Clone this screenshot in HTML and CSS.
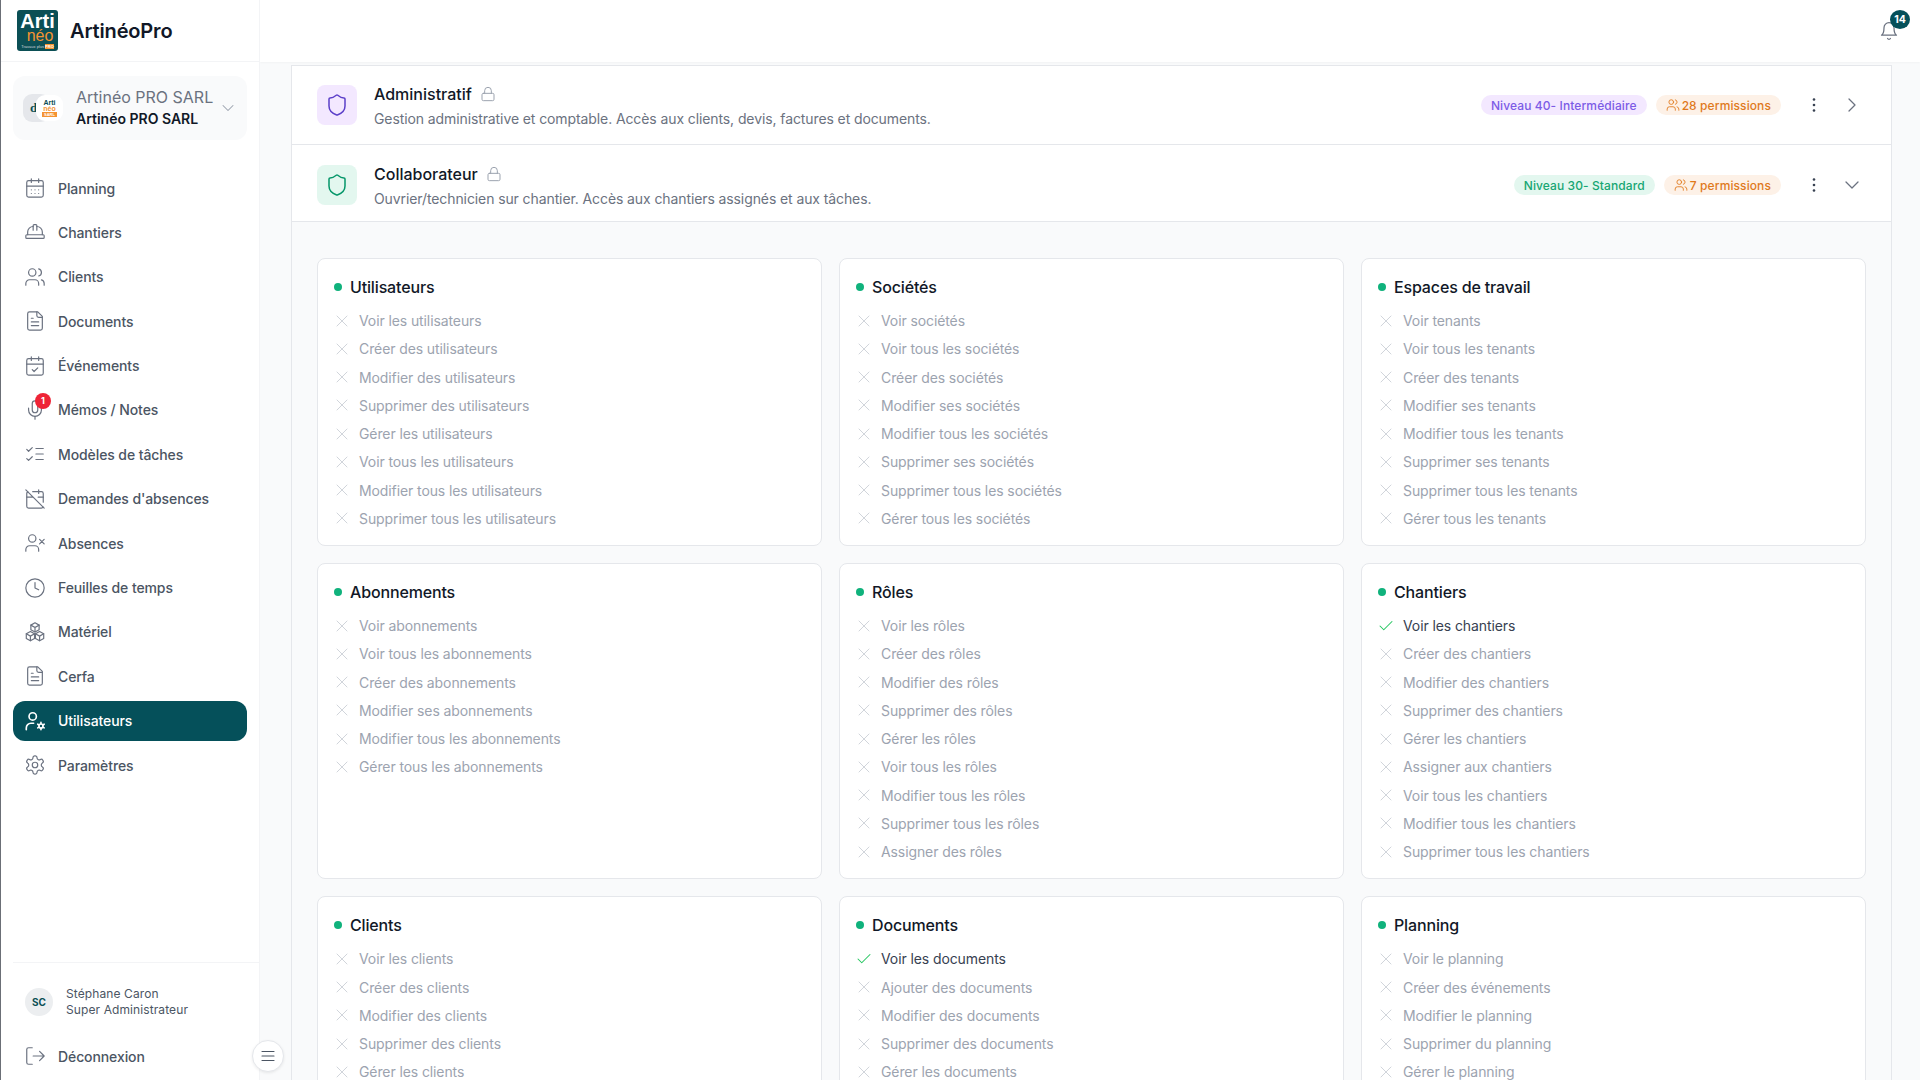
FILE: index.html
```html
<!DOCTYPE html>
<html lang="fr">
<head>
<meta charset="utf-8">
<title>ArtinéoPro</title>
<link rel="stylesheet" href="styles.css">
</head>
<body>
<svg class="defs" width="0" height="0" aria-hidden="true">
<symbol id="i-calendar" viewBox="0 0 24 24"><rect x="3" y="4" width="18" height="18" rx="2"/><path d="M16 2v4M8 2v4M3 10h18M8 14h.01M12 14h.01M16 14h.01M8 18h.01M12 18h.01M16 18h.01"/></symbol>
<symbol id="i-hat" viewBox="0 0 24 24"><path d="M2 18a1 1 0 0 0 1 1h18a1 1 0 0 0 1-1v-2a1 1 0 0 0-1-1H3a1 1 0 0 0-1 1v2z"/><path d="M10 10V5a1 1 0 0 1 1-1h2a1 1 0 0 1 1 1v5"/><path d="M4 15v-3a6 6 0 0 1 6-6"/><path d="M14 6a6 6 0 0 1 6 6v3"/></symbol>
<symbol id="i-users" viewBox="0 0 24 24"><path d="M16 21v-2a4 4 0 0 0-4-4H6a4 4 0 0 0-4 4v2"/><circle cx="9" cy="7" r="4"/><path d="M22 21v-2a4 4 0 0 0-3-3.87"/><path d="M16 3.13a4 4 0 0 1 0 7.75"/></symbol>
<symbol id="i-file" viewBox="0 0 24 24"><path d="M15 2H6a2 2 0 0 0-2 2v16a2 2 0 0 0 2 2h12a2 2 0 0 0 2-2V7Z"/><path d="M14 2v4a2 2 0 0 0 2 2h4"/><path d="M10 9H8M16 13H8M16 17H8"/></symbol>
<symbol id="i-calcheck" viewBox="0 0 24 24"><rect x="3" y="4" width="18" height="18" rx="2"/><path d="M16 2v4M8 2v4M3 10h18M9 16l2 2 4-4"/></symbol>
<symbol id="i-mic" viewBox="0 0 24 24"><path d="M12 2a3 3 0 0 0-3 3v7a3 3 0 0 0 6 0V5a3 3 0 0 0-3-3Z"/><path d="M19 10v2a7 7 0 0 1-14 0v-2"/><path d="M12 19v3"/></symbol>
<symbol id="i-list" viewBox="0 0 24 24"><path d="m3 17 2 2 4-4M3 7l2 2 4-4M13 6h8M13 12h8M13 18h8"/></symbol>
<symbol id="i-caloff" viewBox="0 0 24 24"><path d="M4.2 4.2A2 2 0 0 0 3 6v14a2 2 0 0 0 2 2h14a2 2 0 0 0 1.82-1.18"/><path d="M21 15.5V6a2 2 0 0 0-2-2H9.5"/><path d="M16 2v4M3 10h7M21 10h-5.5M2 2l20 20"/></symbol>
<symbol id="i-userx" viewBox="0 0 24 24"><path d="M16 21v-2a4 4 0 0 0-4-4H6a4 4 0 0 0-4 4v2"/><circle cx="9" cy="7" r="4"/><path d="m17 8 5 5M22 8l-5 5"/></symbol>
<symbol id="i-clock" viewBox="0 0 24 24"><circle cx="12" cy="12" r="10"/><path d="M12 6v6l4 2"/></symbol>
<symbol id="i-boxes" viewBox="0 0 24 24"><path d="M12 2l4.5 2.5v5L12 12 7.500 9.500v-5zM7 11.500l4.500 2.500v5L7 21.500 2.500 19v-5zM17 11.500l4.500 2.500v5L17 21.500 12.500 19v-5z"/><path d="M7.500 4.500 12 7l4.500-2.500M12 7v5M2.500 14 7 16.500l4.500-2.500M7 16.500v5M12.500 14l4.500 2.500 4.500-2.500M17 16.500v5"/></symbol>
<symbol id="i-usercog" viewBox="0 0 24 24"><circle cx="9.500" cy="7" r="4"/><path d="M2.500 21.500v-2a5 5 0 0 1 5-5h3"/><circle cx="18.500" cy="17.500" r="2.200"/><path d="M18.500 13.500v1.500M18.500 20v1.500M15 15.500l1.300.8M20.700 18.700l1.300.8M15 19.500l1.300-.8M20.700 16.300l1.300-.8"/></symbol>
<symbol id="i-gear" viewBox="0 0 24 24"><path d="M12.220 2h-.44a2 2 0 0 0-2 2v.18a2 2 0 0 1-1 1.730l-.43.25a2 2 0 0 1-2 0l-.15-.08a2 2 0 0 0-2.730.73l-.22.38a2 2 0 0 0 .73 2.730l.15.1a2 2 0 0 1 1 1.720v.51a2 2 0 0 1-1 1.740l-.15.09a2 2 0 0 0-.73 2.730l.22.38a2 2 0 0 0 2.730.73l.15-.08a2 2 0 0 1 2 0l.43.25a2 2 0 0 1 1 1.730V20a2 2 0 0 0 2 2h.44a2 2 0 0 0 2-2v-.18a2 2 0 0 1 1-1.730l.43-.25a2 2 0 0 1 2 0l.15.08a2 2 0 0 0 2.730-.73l.22-.39a2 2 0 0 0-.73-2.730l-.15-.08a2 2 0 0 1-1-1.740v-.5a2 2 0 0 1 1-1.740l.15-.09a2 2 0 0 0 .73-2.730l-.22-.38a2 2 0 0 0-2.730-.73l-.15.08a2 2 0 0 1-2 0l-.43-.25a2 2 0 0 1-1-1.730V4a2 2 0 0 0-2-2z"/><circle cx="12" cy="12" r="3"/></symbol>
<symbol id="i-logout" viewBox="0 0 24 24"><path d="M9 21H5a2 2 0 0 1-2-2V5a2 2 0 0 1 2-2h4"/><path d="m17 17 5-5-5-5M22 12H10"/></symbol>
<symbol id="i-shield" viewBox="0 0 24 24"><path d="M20 13c0 5-3.500 7.500-7.660 8.950a1 1 0 0 1-.67-.01C7.500 20.500 4 18 4 13V6a1 1 0 0 1 1-1c2 0 4.500-1.200 6.240-2.720a1.170 1.170 0 0 1 1.520 0C14.510 3.810 17 5 19 5a1 1 0 0 1 1 1z"/></symbol>
<symbol id="i-lock" viewBox="0 0 24 24"><rect x="3" y="11" width="18" height="11" rx="2"/><path d="M7 11V7a5 5 0 0 1 10 0v4"/></symbol>
<symbol id="i-bell" viewBox="0 0 24 24"><path d="M6 8a6 6 0 0 1 12 0c0 7 3 9 3 9H3s3-2 3-9"/><path d="M10.300 21a1.940 1.940 0 0 0 3.400 0"/></symbol>
<symbol id="i-down" viewBox="0 0 24 24"><path d="m6 9 6 6 6-6"/></symbol>
<symbol id="i-right" viewBox="0 0 24 24"><path d="m9 6 6 6-6 6"/></symbol>
<symbol id="i-x" viewBox="0 0 24 24"><path d="M18 6 6 18M6 6l12 12"/></symbol>
<symbol id="i-check" viewBox="0 0 24 24"><path d="M20 6 9 17l-5-5"/></symbol>
<symbol id="i-menu" viewBox="0 0 24 24"><path d="M4 6h16M4 12h16M4 18h16"/></symbol>
</svg>

<div class="app">
  <aside class="sidebar">
    <header class="brand">
      <div class="logo"><span class="logo-a">Arti</span><span class="logo-n">néo</span><span class="logo-p">Travaux plus <b>PRO</b></span></div>
      <span class="brand-name">ArtinéoPro</span>
    </header>
    <div class="company">
      <div class="company-logos">
        <span class="back-logo">d</span>
        <span class="front-logo"><span class="mini-a">Arti</span><span class="mini-n">néo</span><span class="mini-p">SARL</span></span>
      </div>
      <div class="company-text"><span class="company-top">Artinéo PRO SARL</span><span class="company-bottom">Artinéo PRO SARL</span></div>
      <svg class="ico company-chev"><use href="#i-down"/></svg>
    </div>
    <nav class="nav">
      <a class="nav-item"><svg class="ico"><use href="#i-calendar"/></svg>Planning</a>
      <a class="nav-item"><svg class="ico"><use href="#i-hat"/></svg>Chantiers</a>
      <a class="nav-item"><svg class="ico"><use href="#i-users"/></svg>Clients</a>
      <a class="nav-item"><svg class="ico"><use href="#i-file"/></svg>Documents</a>
      <a class="nav-item"><svg class="ico"><use href="#i-calcheck"/></svg>Événements</a>
      <a class="nav-item"><span class="ico-wrap"><svg class="ico"><use href="#i-mic"/></svg><span class="red-badge">1</span></span>Mémos / Notes</a>
      <a class="nav-item"><svg class="ico"><use href="#i-list"/></svg>Modèles de tâches</a>
      <a class="nav-item"><svg class="ico"><use href="#i-caloff"/></svg>Demandes d'absences</a>
      <a class="nav-item"><svg class="ico"><use href="#i-userx"/></svg>Absences</a>
      <a class="nav-item"><svg class="ico"><use href="#i-clock"/></svg>Feuilles de temps</a>
      <a class="nav-item"><svg class="ico"><use href="#i-boxes"/></svg>Matériel</a>
      <a class="nav-item"><svg class="ico"><use href="#i-file"/></svg>Cerfa</a>
      <a class="nav-item active"><svg class="ico"><use href="#i-usercog"/></svg>Utilisateurs</a>
      <a class="nav-item"><svg class="ico"><use href="#i-gear"/></svg>Paramètres</a>
    </nav>
    <footer class="side-foot">
      <div class="user"><span class="avatar">SC</span><div class="user-text"><span>Stéphane Caron</span><span>Super Administrateur</span></div></div>
      <a class="nav-item logout"><svg class="ico"><use href="#i-logout"/></svg>Déconnexion</a>
    </footer>
    <button class="collapse"><svg class="ico"><use href="#i-menu"/></svg></button>
  </aside>

  <main class="main">
    <div class="topbar">
      <span class="bell"><svg class="ico"><use href="#i-bell"/></svg><span class="bell-badge">14</span></span>
    </div>
    <div class="workspace">
      <section class="panel">
        <div class="role role-first">
          <span class="role-icon purple"><svg class="ico"><use href="#i-shield"/></svg></span>
          <div class="role-text">
            <div class="role-title">Administratif <svg class="ico lock"><use href="#i-lock"/></svg></div>
            <p class="role-desc">Gestion administrative et comptable. Accès aux clients, devis, factures et documents.</p>
          </div>
          <span class="pill pill-purple">Niveau 40- Intermédiaire</span>
          <span class="pill pill-orange"><svg class="ico"><use href="#i-users"/></svg>28 permissions</span>
          <svg class="kebab" viewBox="0 0 4 16"><circle cx="2" cy="2.500" r="1.300"/><circle cx="2" cy="8" r="1.300"/><circle cx="2" cy="13.500" r="1.300"/></svg>
          <svg class="ico chev"><use href="#i-right"/></svg>
        </div>
        <div class="role role-open">
          <span class="role-icon green"><svg class="ico"><use href="#i-shield"/></svg></span>
          <div class="role-text">
            <div class="role-title">Collaborateur <svg class="ico lock"><use href="#i-lock"/></svg></div>
            <p class="role-desc">Ouvrier/technicien sur chantier. Accès aux chantiers assignés et aux tâches.</p>
          </div>
          <span class="pill pill-green">Niveau 30- Standard</span>
          <span class="pill pill-orange"><svg class="ico"><use href="#i-users"/></svg>7 permissions</span>
          <svg class="kebab" viewBox="0 0 4 16"><circle cx="2" cy="2.500" r="1.300"/><circle cx="2" cy="8" r="1.300"/><circle cx="2" cy="13.500" r="1.300"/></svg>
          <svg class="ico chev"><use href="#i-down"/></svg>
        </div>
        <div class="grid">
          <article class="card"><h3>Utilisateurs</h3><ul>
            <li><svg class="ico"><use href="#i-x"/></svg>Voir les utilisateurs</li>
            <li><svg class="ico"><use href="#i-x"/></svg>Créer des utilisateurs</li>
            <li><svg class="ico"><use href="#i-x"/></svg>Modifier des utilisateurs</li>
            <li><svg class="ico"><use href="#i-x"/></svg>Supprimer des utilisateurs</li>
            <li><svg class="ico"><use href="#i-x"/></svg>Gérer les utilisateurs</li>
            <li><svg class="ico"><use href="#i-x"/></svg>Voir tous les utilisateurs</li>
            <li><svg class="ico"><use href="#i-x"/></svg>Modifier tous les utilisateurs</li>
            <li><svg class="ico"><use href="#i-x"/></svg>Supprimer tous les utilisateurs</li>
          </ul></article>
          <article class="card"><h3>Sociétés</h3><ul>
            <li><svg class="ico"><use href="#i-x"/></svg>Voir sociétés</li>
            <li><svg class="ico"><use href="#i-x"/></svg>Voir tous les sociétés</li>
            <li><svg class="ico"><use href="#i-x"/></svg>Créer des sociétés</li>
            <li><svg class="ico"><use href="#i-x"/></svg>Modifier ses sociétés</li>
            <li><svg class="ico"><use href="#i-x"/></svg>Modifier tous les sociétés</li>
            <li><svg class="ico"><use href="#i-x"/></svg>Supprimer ses sociétés</li>
            <li><svg class="ico"><use href="#i-x"/></svg>Supprimer tous les sociétés</li>
            <li><svg class="ico"><use href="#i-x"/></svg>Gérer tous les sociétés</li>
          </ul></article>
          <article class="card"><h3>Espaces de travail</h3><ul>
            <li><svg class="ico"><use href="#i-x"/></svg>Voir tenants</li>
            <li><svg class="ico"><use href="#i-x"/></svg>Voir tous les tenants</li>
            <li><svg class="ico"><use href="#i-x"/></svg>Créer des tenants</li>
            <li><svg class="ico"><use href="#i-x"/></svg>Modifier ses tenants</li>
            <li><svg class="ico"><use href="#i-x"/></svg>Modifier tous les tenants</li>
            <li><svg class="ico"><use href="#i-x"/></svg>Supprimer ses tenants</li>
            <li><svg class="ico"><use href="#i-x"/></svg>Supprimer tous les tenants</li>
            <li><svg class="ico"><use href="#i-x"/></svg>Gérer tous les tenants</li>
          </ul></article>
          <article class="card"><h3>Abonnements</h3><ul>
            <li><svg class="ico"><use href="#i-x"/></svg>Voir abonnements</li>
            <li><svg class="ico"><use href="#i-x"/></svg>Voir tous les abonnements</li>
            <li><svg class="ico"><use href="#i-x"/></svg>Créer des abonnements</li>
            <li><svg class="ico"><use href="#i-x"/></svg>Modifier ses abonnements</li>
            <li><svg class="ico"><use href="#i-x"/></svg>Modifier tous les abonnements</li>
            <li><svg class="ico"><use href="#i-x"/></svg>Gérer tous les abonnements</li>
          </ul></article>
          <article class="card"><h3>Rôles</h3><ul>
            <li><svg class="ico"><use href="#i-x"/></svg>Voir les rôles</li>
            <li><svg class="ico"><use href="#i-x"/></svg>Créer des rôles</li>
            <li><svg class="ico"><use href="#i-x"/></svg>Modifier des rôles</li>
            <li><svg class="ico"><use href="#i-x"/></svg>Supprimer des rôles</li>
            <li><svg class="ico"><use href="#i-x"/></svg>Gérer les rôles</li>
            <li><svg class="ico"><use href="#i-x"/></svg>Voir tous les rôles</li>
            <li><svg class="ico"><use href="#i-x"/></svg>Modifier tous les rôles</li>
            <li><svg class="ico"><use href="#i-x"/></svg>Supprimer tous les rôles</li>
            <li><svg class="ico"><use href="#i-x"/></svg>Assigner des rôles</li>
          </ul></article>
          <article class="card"><h3>Chantiers</h3><ul>
            <li class="on"><svg class="ico"><use href="#i-check"/></svg>Voir les chantiers</li>
            <li><svg class="ico"><use href="#i-x"/></svg>Créer des chantiers</li>
            <li><svg class="ico"><use href="#i-x"/></svg>Modifier des chantiers</li>
            <li><svg class="ico"><use href="#i-x"/></svg>Supprimer des chantiers</li>
            <li><svg class="ico"><use href="#i-x"/></svg>Gérer les chantiers</li>
            <li><svg class="ico"><use href="#i-x"/></svg>Assigner aux chantiers</li>
            <li><svg class="ico"><use href="#i-x"/></svg>Voir tous les chantiers</li>
            <li><svg class="ico"><use href="#i-x"/></svg>Modifier tous les chantiers</li>
            <li><svg class="ico"><use href="#i-x"/></svg>Supprimer tous les chantiers</li>
          </ul></article>
          <article class="card"><h3>Clients</h3><ul>
            <li><svg class="ico"><use href="#i-x"/></svg>Voir les clients</li>
            <li><svg class="ico"><use href="#i-x"/></svg>Créer des clients</li>
            <li><svg class="ico"><use href="#i-x"/></svg>Modifier des clients</li>
            <li><svg class="ico"><use href="#i-x"/></svg>Supprimer des clients</li>
            <li><svg class="ico"><use href="#i-x"/></svg>Gérer les clients</li>
          </ul></article>
          <article class="card"><h3>Documents</h3><ul>
            <li class="on"><svg class="ico"><use href="#i-check"/></svg>Voir les documents</li>
            <li><svg class="ico"><use href="#i-x"/></svg>Ajouter des documents</li>
            <li><svg class="ico"><use href="#i-x"/></svg>Modifier des documents</li>
            <li><svg class="ico"><use href="#i-x"/></svg>Supprimer des documents</li>
            <li><svg class="ico"><use href="#i-x"/></svg>Gérer les documents</li>
          </ul></article>
          <article class="card"><h3>Planning</h3><ul>
            <li><svg class="ico"><use href="#i-x"/></svg>Voir le planning</li>
            <li><svg class="ico"><use href="#i-x"/></svg>Créer des événements</li>
            <li><svg class="ico"><use href="#i-x"/></svg>Modifier le planning</li>
            <li><svg class="ico"><use href="#i-x"/></svg>Supprimer du planning</li>
            <li><svg class="ico"><use href="#i-x"/></svg>Gérer le planning</li>
          </ul></article>
        </div>
      </section>
    </div>
  </main>
</div>
</body>
</html>
```
FILE: styles.css
```css
* { box-sizing: border-box; }
html, body { margin: 0; height: 100%; overflow: hidden; }
body { font-family: Inter, "Liberation Sans", sans-serif; font-size: 14px; color: #111827; background: #f9fafb; }
.defs { position: absolute; }
.ico { width: 18px; height: 18px; fill: none; stroke: currentColor; stroke-width: 1.5; stroke-linecap: round; stroke-linejoin: round; flex: none; display: block; }

.app { display: flex; height: 1080px; }

/* Sidebar */
.sidebar { position: relative; width: 260px; flex: none; height: 100%; background: #fff; border-left: 1px solid #6b6f76; border-right: 1px solid #f3f4f6; display: flex; flex-direction: column; z-index: 2; }
.brand { height: 62px; flex: none; display: flex; align-items: center; gap: 12px; padding-left: 16px; border-bottom: 1px solid #f3f4f6; }
.logo { width: 41px; height: 41px; background: #0b4f55; border-radius: 3px; display: flex; flex-direction: column; align-items: center; overflow: hidden; }
.logo-a { color: #fff; font: 700 20px/17px "Liberation Sans", sans-serif; margin-top: 3px; }
.logo-n { color: #f59331; font: 400 16px/12px "Liberation Sans", sans-serif; margin-left: 5px; }
.logo-p { color: #d1d5db; font: 400 4px/6px "Liberation Sans", sans-serif; margin-top: 2px; white-space: nowrap; }
.logo-p b { background: #f59331; color: #fff; }
.brand-name { font-size: 20px; font-weight: 600; color: #111827; letter-spacing: -0.15px; }

.company { margin: 14px 12px 0; height: 64px; flex: none; background: #f9fafb; border-radius: 12px; display: flex; align-items: center; padding: 0 9px 0 10px; }
.company-logos { position: relative; width: 43px; height: 28px; flex: none; }
.back-logo { position: absolute; left: 0; top: 0; width: 27px; height: 28px; border-radius: 9px; background: #e5e7eb; color: #0b4f55; font: 700 13px/28px "Liberation Serif", serif; padding-left: 7px; }
.front-logo { position: absolute; left: 13px; top: 1px; width: 27px; height: 26px; border-radius: 9px; background: #fff; display: flex; flex-direction: column; align-items: center; justify-content: center; }
.mini-a { font: 700 7px/7px "Liberation Sans", sans-serif; color: #0b4f55; }
.mini-n { font: 700 7px/6px "Liberation Sans", sans-serif; color: #f59331; }
.mini-p { font: 700 4px/5px "Liberation Sans", sans-serif; color: #fff; background: #f59331; padding: 0 2px; }
.company-text { display: flex; flex-direction: column; margin-left: 10px; flex: 1; min-width: 0; white-space: nowrap; }
.company-top { font-size: 16px; line-height: 22px; color: #6b7280; }
.company-bottom { font-size: 14px; line-height: 22px; font-weight: 600; color: #111827; }
.company-chev { width: 20px; height: 20px; color: #9ca3af; stroke-width: 1.25; }

.nav { display: flex; flex-direction: column; gap: 4.4px; padding: 0 12px; margin-top: 28px; }
.nav-item { display: flex; align-items: center; height: 40px; padding-left: 11px; gap: 12px; border-radius: 12px; font-size: 14px; font-weight: 450; letter-spacing: -0.1px; color: #4b5563; }
.nav-item .ico { width: 22px; height: 22px; color: #6b7280; stroke-width: 1.3; }
.nav-item.active { background: #05505a; color: #fff; }
.nav-item.active .ico { color: #fff; stroke-width: 1.8; }
.ico-wrap { position: relative; display: block; width: 22px; height: 22px; flex: none; }
.red-badge { position: absolute; top: -6px; left: 11px; width: 16px; height: 16px; border-radius: 50%; background: #ee2436; color: #fff; font-size: 9px; font-weight: 700; line-height: 16px; text-align: center; }

.side-foot { margin-top: auto; margin-left: 12px; border-top: 1px solid #f3f4f6; padding-bottom: 4px; }
.user { display: flex; align-items: center; height: 72px; padding-left: 12px; padding-top: 6px; gap: 13px; }
.avatar { width: 28px; height: 28px; border-radius: 50%; background: #eceef0; color: #0b4f55; font-size: 10px; font-weight: 700; line-height: 28px; text-align: center; flex: none; }
.user-text { display: flex; flex-direction: column; font-size: 12px; line-height: 16px; color: #4b5563; letter-spacing: 0.1px; }
.logout { margin-top: 1px; margin-left: -12px; margin-right: 12px; padding-left: 23px; }
.collapse { position: absolute; left: 251px; top: 1040px; width: 32px; height: 32px; border-radius: 50%; background: #fff; border: 1px solid #e5e7eb; box-shadow: 0 1px 3px rgba(0,0,0,.08); padding: 0; display: flex; align-items: center; justify-content: center; color: #4b5563; }

/* Main */
.main { flex: 1; min-width: 0; height: 100%; display: flex; flex-direction: column; }
.topbar { height: 62px; flex: none; background: #fff; display: flex; justify-content: flex-end; align-items: center; padding-right: 22px; box-shadow: 0 1px 2px rgba(0,0,0,.03); }
.bell { position: relative; display: block; width: 18px; height: 20px; color: #6b7280; }
.bell .ico { width: 20px; height: 20px; margin-left: -1px; }
.bell-badge { position: absolute; left: 10px; top: -11px; width: 20px; height: 19px; border-radius: 50%; background: #05505a; color: #fff; font-size: 10.5px; font-weight: 700; line-height: 19px; text-align: center; }

.workspace { flex: 1; min-height: 0; padding: 3px 28px 0 31px; overflow: hidden; }
.panel { border: 1px solid #e5e7eb; border-bottom: 0; height: 100%; background: #f9fafb; }

.role { display: flex; align-items: center; padding: 0 27px 0 25px; background: #fff; border-bottom: 1px solid #e5e7eb; }
.role-first { height: 79px; }
.role-open { height: 77px; padding-top: 4px; }
.role-icon { width: 40px; height: 40px; border-radius: 8px; display: flex; align-items: center; justify-content: center; flex: none; }
.role-icon .ico { width: 24px; height: 24px; }
.purple { background: #f3e8ff; color: #5b3fc9; }
.green { background: #e3f7ef; color: #059669; }
.role-text { flex: 1; min-width: 0; margin-left: 17px; }
.role-title { display: flex; align-items: center; gap: 7px; font-size: 16px; font-weight: 500; line-height: 24px; color: #111827; }
.role-title .lock { width: 16px; height: 16px; color: #9ca3af; stroke-width: 1.5; margin-left: 1px; }
.role-desc { margin: 3px 0 0; font-size: 14px; line-height: 20px; color: #6b7280; letter-spacing: -0.1px; }
.pill { height: 20px; border-radius: 10px; display: flex; align-items: center; padding: 0 10px; font-size: 12px; font-weight: 500; letter-spacing: 0.1px; white-space: nowrap; margin-left: 9px; flex: none; }
.pill-purple { background: #f3e8ff; color: #7c5ce6; }
.pill-green { background: #e3f7ef; color: #17a673; }
.pill-orange { background: #fdf1e7; color: #e0791c; gap: 2px; }
.pill-orange .ico { width: 14px; height: 14px; }
.kebab { width: 4px; height: 16px; fill: #374151; margin-left: 31px; flex: none; }
.chev { width: 24px; height: 24px; color: #6b7280; margin-left: 24px; stroke-width: 1.25; }

.grid { display: grid; grid-template-columns: repeat(3, 1fr); gap: 17px; padding: 36px 25px 0 25px; }
.card { background: #fff; border: 1px solid #e5e7eb; border-radius: 8px; padding: 14px 16px 12.5px; }
.card h3 { position: relative; margin: 0 0 5.5px; padding-left: 16px; font-size: 16px; font-weight: 500; letter-spacing: -0.15px; line-height: 28px; color: #111827; }
.card h3::before { content: ""; position: absolute; left: 0; top: 10px; width: 8px; height: 8px; border-radius: 50%; background: #10b27c; }
.card ul { list-style: none; margin: 0; padding: 0 0 0 2px; }
.card li { display: flex; align-items: center; height: 28.25px; gap: 7px; font-size: 14px; letter-spacing: -0.1px; color: #9ca3af; white-space: nowrap; }
.card li .ico { width: 20px; height: 20px; margin-left: -4px; color: #d1d5db; stroke-width: 1.2; }
.card li.on { color: #374151; }
.card li.on .ico { width: 18px; height: 18px; margin-left: -3px; margin-right: 1px; color: #22c55e; stroke-width: 1.4; }
```
